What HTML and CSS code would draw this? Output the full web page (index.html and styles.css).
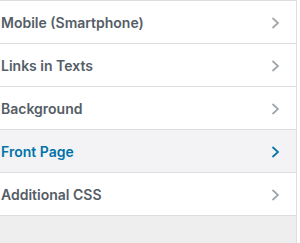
FILE: index.html
```html
<!DOCTYPE html>
<html lang="en">
<head>
  <meta charset="UTF-8">
  <meta name="viewport" content="width=device-width, initial-scale=1.0">
  <title>Customize</title>
  <link rel="stylesheet" href="styles.css">
</head>
<body>
  <div class="panel">
    <ul class="sections">
      <li class="section">
        <span class="title">Mobile (Smartphone)</span>
        <svg class="arrow" width="9" height="12" viewBox="0 0 9 12"><polyline points="1.5,1 7,6 1.5,11" /></svg>
      </li>
      <li class="section">
        <span class="title">Links in Texts</span>
        <svg class="arrow" width="9" height="12" viewBox="0 0 9 12"><polyline points="1.5,1 7,6 1.5,11" /></svg>
      </li>
      <li class="section">
        <span class="title">Background</span>
        <svg class="arrow" width="9" height="12" viewBox="0 0 9 12"><polyline points="1.5,1 7,6 1.5,11" /></svg>
      </li>
      <li class="section active">
        <span class="title">Front Page</span>
        <svg class="arrow" width="9" height="12" viewBox="0 0 9 12"><polyline points="1.5,1 7,6 1.5,11" /></svg>
      </li>
      <li class="section">
        <span class="title">Additional CSS</span>
        <svg class="arrow" width="9" height="12" viewBox="0 0 9 12"><polyline points="1.5,1 7,6 1.5,11" /></svg>
      </li>
    </ul>
  </div>
</body>
</html>
```

FILE: styles.css
```css
body {
  margin: 0;
  background: #fff;
  font-family: Inter, "Noto Sans", sans-serif;
}
.panel {
  width: 296px;
  height: 243px;
  background: #eee;
  border-right: 1px solid #ddd;
}
.sections {
  list-style: none;
  margin: 0;
  padding: 0;
  border-top: 1px solid #ddd;
}
.section {
  display: flex;
  align-items: center;
  justify-content: space-between;
  padding: 11px 16px 10px 1px;
  line-height: 21px;
  font-size: 14px;
  font-weight: 600;
  color: #555d66;
  background: #fff;
  border-bottom: 1px solid #ddd;
}
.arrow {
  fill: none;
  stroke: #a0a5aa;
  stroke-width: 1.7;
}
.section.active {
  background: #f3f3f5;
  color: #0073aa;
}
.section.active .arrow {
  stroke: #0073aa;
}
```
